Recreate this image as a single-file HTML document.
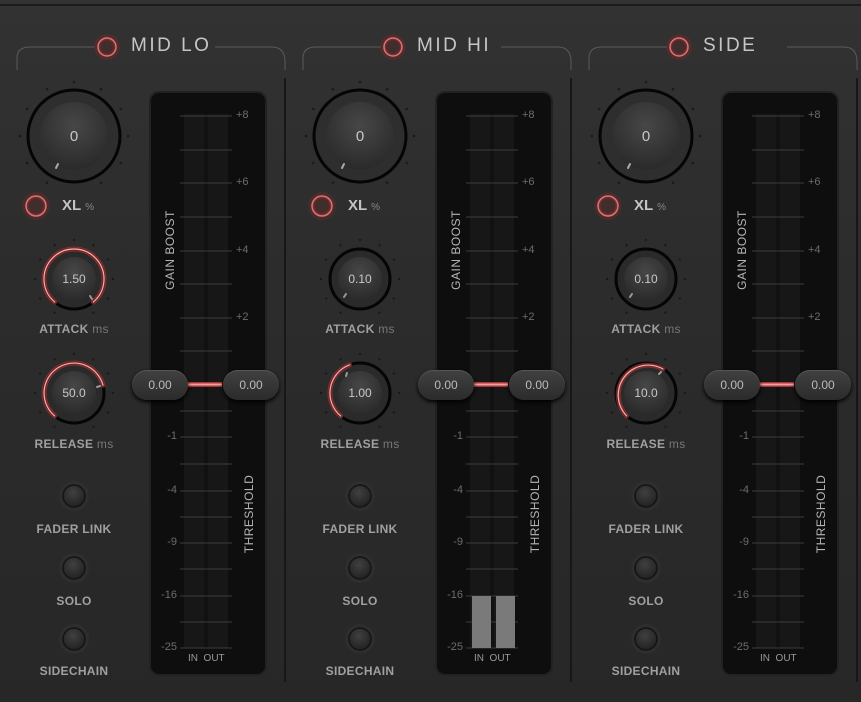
<!DOCTYPE html>
<html><head><meta charset="utf-8">
<style>
*{margin:0;padding:0;box-sizing:border-box}
body{width:861px;height:702px;overflow:hidden;background:linear-gradient(#323232,#2c2c2c 40%,#272727);font-family:"Liberation Sans",sans-serif;position:relative}
.s{position:absolute;top:0;width:286px;height:702px}
.t{position:absolute;white-space:nowrap;color:#bdbdbd}
.title{font-size:19px;letter-spacing:2.5px;color:#c6c6c6;top:35px;left:131px}
.lbl{font-size:12px;font-weight:bold;width:150px;left:-1px;text-align:center;color:#a0a0a0;letter-spacing:.3px}
.lbl span{font-weight:normal;color:#777}
.kv{font-size:12px;width:60px;text-align:center;color:#c8c8c8}
.tk{font-size:11px;color:#6c6c6c}
.neg{width:30px;text-align:right;left:147px}
.pos{left:236px}
.vt{font-size:12px;color:#b5b5b5;letter-spacing:.5px;transform:rotate(-90deg);transform-origin:center}
.pill{position:absolute;top:370px;width:56px;height:30px;border-radius:15px;background:linear-gradient(#414141,#2b2b2b);box-shadow:0 2px 4px #000,inset 0 1px 0 #555;color:#bbb;font-size:12px;text-align:center;line-height:30px}
</style></head><body>
<svg width="861" height="702" style="position:absolute;left:0;top:0">
<defs>
<radialGradient id="kf" cx="50%" cy="35%" r="65%"><stop offset="0" stop-color="#474747"/><stop offset="1" stop-color="#2a2a2a"/></radialGradient>
<radialGradient id="led" cx="50%" cy="50%" r="50%"><stop offset="0" stop-color="#3a3030"/><stop offset=".7" stop-color="#4a2a2a"/><stop offset="1" stop-color="#8a3a3a"/></radialGradient>
<radialGradient id="btn" cx="45%" cy="35%" r="60%"><stop offset="0" stop-color="#404040"/><stop offset="1" stop-color="#242424"/></radialGradient>
<symbol id="strip" width="286" height="702" overflow="visible">
<path d="M17 70 V58 Q17 47 30 47 H95 M215 47 H272 Q284 47 285 60 V70" fill="none" stroke="#5a5a5a" stroke-width="1"/>
<circle cx="107" cy="47" r="13" fill="#6a2a2a" opacity=".5"/>
<circle cx="107" cy="47" r="9" fill="url(#led)" stroke="#e07070" stroke-width="1.5"/>
<g fill="#1a1a1a">
<circle cx="74" cy="82" r="1.3"/><circle cx="74" cy="82" r="1.3" transform="rotate(30 74 136)"/><circle cx="74" cy="82" r="1.3" transform="rotate(60 74 136)"/><circle cx="74" cy="82" r="1.3" transform="rotate(90 74 136)"/><circle cx="74" cy="82" r="1.3" transform="rotate(120 74 136)"/><circle cx="74" cy="82" r="1.3" transform="rotate(150 74 136)"/><circle cx="74" cy="82" r="1.3" transform="rotate(-30 74 136)"/><circle cx="74" cy="82" r="1.3" transform="rotate(-60 74 136)"/><circle cx="74" cy="82" r="1.3" transform="rotate(-90 74 136)"/><circle cx="74" cy="82" r="1.3" transform="rotate(-120 74 136)"/><circle cx="74" cy="82" r="1.3" transform="rotate(-150 74 136)"/>
<circle cx="74" cy="240" r="1.2"/><circle cx="74" cy="240" r="1.2" transform="rotate(30 74 279)"/><circle cx="74" cy="240" r="1.2" transform="rotate(60 74 279)"/><circle cx="74" cy="240" r="1.2" transform="rotate(90 74 279)"/><circle cx="74" cy="240" r="1.2" transform="rotate(120 74 279)"/><circle cx="74" cy="240" r="1.2" transform="rotate(150 74 279)"/><circle cx="74" cy="240" r="1.2" transform="rotate(-30 74 279)"/><circle cx="74" cy="240" r="1.2" transform="rotate(-60 74 279)"/><circle cx="74" cy="240" r="1.2" transform="rotate(-90 74 279)"/><circle cx="74" cy="240" r="1.2" transform="rotate(-120 74 279)"/><circle cx="74" cy="240" r="1.2" transform="rotate(-150 74 279)"/>
<circle cx="74" cy="354" r="1.2"/><circle cx="74" cy="354" r="1.2" transform="rotate(30 74 393)"/><circle cx="74" cy="354" r="1.2" transform="rotate(60 74 393)"/><circle cx="74" cy="354" r="1.2" transform="rotate(90 74 393)"/><circle cx="74" cy="354" r="1.2" transform="rotate(120 74 393)"/><circle cx="74" cy="354" r="1.2" transform="rotate(150 74 393)"/><circle cx="74" cy="354" r="1.2" transform="rotate(-30 74 393)"/><circle cx="74" cy="354" r="1.2" transform="rotate(-60 74 393)"/><circle cx="74" cy="354" r="1.2" transform="rotate(-90 74 393)"/><circle cx="74" cy="354" r="1.2" transform="rotate(-120 74 393)"/><circle cx="74" cy="354" r="1.2" transform="rotate(-150 74 393)"/>
</g>
<circle cx="74" cy="136" r="46" fill="#2e2e2e" stroke="#050505" stroke-width="3"/>
<circle cx="74" cy="136" r="34" fill="url(#kf)"/>
<line x1="56" y1="168" x2="58" y2="164" stroke="#aaa" stroke-width="2" stroke-linecap="round"/>
<circle cx="36" cy="206" r="14" fill="#6a2a2a" opacity=".45"/>
<circle cx="36" cy="206" r="10" fill="url(#led)" stroke="#e07070" stroke-width="1.5"/>
<circle cx="74" cy="279" r="30" fill="#2a2a2a" stroke="#050505" stroke-width="3"/>
<circle cx="74" cy="279" r="22" fill="url(#kf)"/>
<circle cx="74" cy="393" r="30" fill="#2a2a2a" stroke="#050505" stroke-width="3"/>
<circle cx="74" cy="393" r="22" fill="url(#kf)"/>
<circle cx="74" cy="496" r="15" fill="#3a3a3a" opacity=".35"/><circle cx="74" cy="496" r="11" fill="url(#btn)" stroke="#141414" stroke-width="1.5"/>
<circle cx="74" cy="568" r="15" fill="#3a3a3a" opacity=".35"/><circle cx="74" cy="568" r="11" fill="url(#btn)" stroke="#141414" stroke-width="1.5"/>
<circle cx="74" cy="639" r="15" fill="#3a3a3a" opacity=".35"/><circle cx="74" cy="639" r="11" fill="url(#btn)" stroke="#141414" stroke-width="1.5"/>
<rect x="149" y="91" width="118" height="585" rx="10" fill="#222"/>
<rect x="151" y="93" width="114" height="581" rx="8" fill="#0e0e0e"/>
<rect x="184" y="114" width="44" height="534" fill="#171717"/>
<rect x="204" y="114" width="4" height="534" fill="#111"/>
<g stroke="#3c3c3c" stroke-width="1">
<path d="M180 116H232M180 150H232M180 183H232M180 217H232M180 251H232M180 284H232M180 318H232M180 351H232M180 411H232M180 437H232M180 464H232M180 491H232M180 517H232M180 543H232M180 569H232M180 596H232M180 622H232M180 648H232"/>
</g>
<rect x="186" y="382" width="36" height="5" fill="#a33"/><rect x="186" y="383.5" width="36" height="2" fill="#f0a0a0"/>
<line x1="285" y1="78" x2="285" y2="682" stroke="#171717" stroke-width="2"/>
</symbol>
</defs>
<line x1="0" y1="5" x2="861" y2="5" stroke="#1c1c1c" stroke-width="2"/>
<use href="#strip" x="0" y="0"/>
<use href="#strip" x="286" y="0"/>
<use href="#strip" x="572" y="0"/>
<g fill="none" stroke-linecap="round">
<path d="M54.7 302 A30 30 0 1 1 93.3 302" stroke="#b03535" stroke-width="5" opacity=".6"/>
<path d="M54.7 302 A30 30 0 1 1 93.3 302" stroke="#f4b0b0" stroke-width="1.2"/>
<path d="M54.7 416 A30 30 0 1 1 103 385.2" stroke="#b03535" stroke-width="5" opacity=".6"/>
<path d="M54.7 416 A30 30 0 1 1 103 385.2" stroke="#f4b0b0" stroke-width="1.2"/>
<path d="M340.7 416 A30 30 0 0 1 349.7 364.8" stroke="#b03535" stroke-width="5" opacity=".6"/>
<path d="M340.7 416 A30 30 0 0 1 349.7 364.8" stroke="#f4b0b0" stroke-width="1.2"/>
<path d="M626.7 416 A30 30 0 0 1 663 369" stroke="#b03535" stroke-width="5" opacity=".6"/>
<path d="M626.7 416 A30 30 0 0 1 663 369" stroke="#f4b0b0" stroke-width="1.2"/>
</g>
<g stroke="#999" stroke-width="2" stroke-linecap="round">
<line x1="90" y1="296" x2="92" y2="299"/><line x1="97" y1="387" x2="100" y2="386"/>
<line x1="344" y1="297" x2="346" y2="294"/><line x1="346" y1="376" x2="347" y2="373"/>
<line x1="630" y1="297" x2="632" y2="294"/><line x1="659" y1="374" x2="661" y2="372"/>
</g>
<rect x="472" y="596" width="19" height="52" fill="#7a7a7a"/>
<rect x="496" y="596" width="19" height="52" fill="#7a7a7a"/>
</svg>

<div class="s" style="left:0">
<div class="t title">MID LO</div>
<div class="t kv" style="left:44px;top:128px;font-size:15px">0</div>
<div class="t" style="left:62px;top:197px;font-size:15px;font-weight:bold;color:#c4c4c4">XL <span style="font-size:10px;font-weight:normal;color:#888">%</span></div>
<div class="t kv" style="left:44px;top:272px">1.50</div>
<div class="t lbl" style="top:322px">ATTACK <span>ms</span></div>
<div class="t kv" style="left:44px;top:386px">50.0</div>
<div class="t lbl" style="top:437px">RELEASE <span>ms</span></div>
<div class="t lbl" style="top:522px">FADER LINK</div>
<div class="t lbl" style="top:594px">SOLO</div>
<div class="t lbl" style="top:664px">SIDECHAIN</div>
<div class="t tk pos" style="top:109px">+8</div><div class="t tk pos" style="top:176px">+6</div><div class="t tk pos" style="top:244px">+4</div><div class="t tk pos" style="top:311px">+2</div>
<div class="t tk neg" style="top:430px">-1</div><div class="t tk neg" style="top:484px">-4</div><div class="t tk neg" style="top:536px">-9</div><div class="t tk neg" style="top:589px">-16</div><div class="t tk neg" style="top:641px">-25</div>
<div class="t tk" style="left:188px;top:653px;color:#999;font-size:10px">IN&nbsp;&nbsp;OUT</div>
<div class="t vt" style="left:130px;top:243px;width:80px;text-align:center">GAIN BOOST</div>
<div class="t vt" style="left:209px;top:507px;width:80px;text-align:center">THRESHOLD</div>
<div class="pill" style="left:132px">0.00</div><div class="pill" style="left:223px">0.00</div>
</div>

<div class="s" style="left:286px">
<div class="t title">MID HI</div>
<div class="t kv" style="left:44px;top:128px;font-size:15px">0</div>
<div class="t" style="left:62px;top:197px;font-size:15px;font-weight:bold;color:#c4c4c4">XL <span style="font-size:10px;font-weight:normal;color:#888">%</span></div>
<div class="t kv" style="left:44px;top:272px">0.10</div>
<div class="t lbl" style="top:322px">ATTACK <span>ms</span></div>
<div class="t kv" style="left:44px;top:386px">1.00</div>
<div class="t lbl" style="top:437px">RELEASE <span>ms</span></div>
<div class="t lbl" style="top:522px">FADER LINK</div>
<div class="t lbl" style="top:594px">SOLO</div>
<div class="t lbl" style="top:664px">SIDECHAIN</div>
<div class="t tk pos" style="top:109px">+8</div><div class="t tk pos" style="top:176px">+6</div><div class="t tk pos" style="top:244px">+4</div><div class="t tk pos" style="top:311px">+2</div>
<div class="t tk neg" style="top:430px">-1</div><div class="t tk neg" style="top:484px">-4</div><div class="t tk neg" style="top:536px">-9</div><div class="t tk neg" style="top:589px">-16</div><div class="t tk neg" style="top:641px">-25</div>
<div class="t tk" style="left:188px;top:653px;color:#999;font-size:10px">IN&nbsp;&nbsp;OUT</div>
<div class="t vt" style="left:130px;top:243px;width:80px;text-align:center">GAIN BOOST</div>
<div class="t vt" style="left:209px;top:507px;width:80px;text-align:center">THRESHOLD</div>
<div class="pill" style="left:132px">0.00</div><div class="pill" style="left:223px">0.00</div>
</div>

<div class="s" style="left:572px">
<div class="t title">SIDE</div>
<div class="t kv" style="left:44px;top:128px;font-size:15px">0</div>
<div class="t" style="left:62px;top:197px;font-size:15px;font-weight:bold;color:#c4c4c4">XL <span style="font-size:10px;font-weight:normal;color:#888">%</span></div>
<div class="t kv" style="left:44px;top:272px">0.10</div>
<div class="t lbl" style="top:322px">ATTACK <span>ms</span></div>
<div class="t kv" style="left:44px;top:386px">10.0</div>
<div class="t lbl" style="top:437px">RELEASE <span>ms</span></div>
<div class="t lbl" style="top:522px">FADER LINK</div>
<div class="t lbl" style="top:594px">SOLO</div>
<div class="t lbl" style="top:664px">SIDECHAIN</div>
<div class="t tk pos" style="top:109px">+8</div><div class="t tk pos" style="top:176px">+6</div><div class="t tk pos" style="top:244px">+4</div><div class="t tk pos" style="top:311px">+2</div>
<div class="t tk neg" style="top:430px">-1</div><div class="t tk neg" style="top:484px">-4</div><div class="t tk neg" style="top:536px">-9</div><div class="t tk neg" style="top:589px">-16</div><div class="t tk neg" style="top:641px">-25</div>
<div class="t tk" style="left:188px;top:653px;color:#999;font-size:10px">IN&nbsp;&nbsp;OUT</div>
<div class="t vt" style="left:130px;top:243px;width:80px;text-align:center">GAIN BOOST</div>
<div class="t vt" style="left:209px;top:507px;width:80px;text-align:center">THRESHOLD</div>
<div class="pill" style="left:132px">0.00</div><div class="pill" style="left:223px">0.00</div>
</div>
</body></html>
